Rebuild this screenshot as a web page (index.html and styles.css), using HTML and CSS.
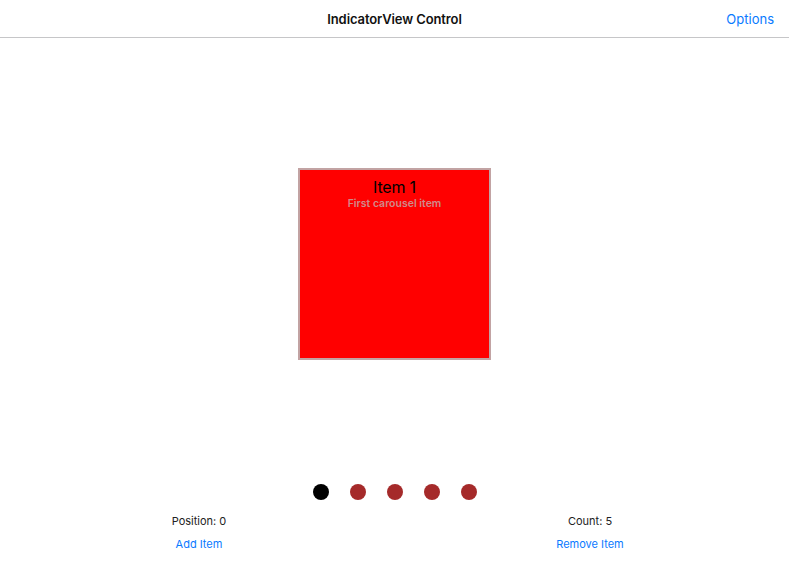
FILE: index.html
```html
<!DOCTYPE html>
<html>
<head>
<meta charset="utf-8">
<link rel="stylesheet" href="styles.css">
</head>
<body>
<div class="window">
  <header class="navbar">
    <div class="title">IndicatorView Control</div>
    <a class="options">Options</a>
  </header>
  <main class="stage">
    <div class="card">
      <div class="card-title">Item 1</div>
      <div class="card-sub">First carousel item</div>
    </div>
  </main>
  <div class="indicators">
    <span class="dot active"></span>
    <span class="dot"></span>
    <span class="dot"></span>
    <span class="dot"></span>
    <span class="dot"></span>
  </div>
  <div class="controls">
    <div class="col">
      <div class="label">Position: 0</div>
      <a class="btn">Add Item</a>
    </div>
    <div class="col">
      <div class="label">Count: 5</div>
      <a class="btn">Remove Item</a>
    </div>
  </div>
</div>
</body>
</html>
```
FILE: styles.css
```css
html, body {
  margin: 0;
  padding: 0;
  background: #ffffff;
}
body {
  font-family: "Inter", "Roboto", "Liberation Sans", sans-serif;
  color: #000;
}
.window {
  width: 789px;
  height: 563px;
  display: flex;
  flex-direction: column;
  border-radius: 0 0 12px 12px;
  overflow: hidden;
  background: #fff;
}
.navbar {
  height: 37px;
  border-bottom: 1px solid #c6c6c8;
  display: flex;
  align-items: center;
  justify-content: center;
  position: relative;
  flex: none;
}
.title {
  font-size: 13px;
  font-weight: 600;
  letter-spacing: -0.1px;
  color: #111;
}
.options {
  position: absolute;
  right: 15px;
  top: 11px;
  font-size: 13px;
  color: #0a7aff;
}
.stage {
  height: 436px;
  flex: none;
  display: flex;
  justify-content: center;
  align-items: flex-start;
}
.card {
  margin-top: 130px;
  width: 189px;
  height: 188px;
  background: #ff0000;
  border: 2px solid #c2a3a3;
  display: flex;
  flex-direction: column;
  align-items: center;
}
.card-title {
  margin-top: 7px;
  font-size: 16px;
  line-height: 20px;
  color: #000;
  letter-spacing: -0.2px;
}
.card-sub {
  font-size: 10.5px;
  font-weight: 600;
  line-height: 13px;
  color: #cf8a8a;
}
.indicators {
  height: 36px;
  flex: none;
  display: flex;
  justify-content: center;
  align-items: center;
  gap: 21px;
  padding-left: 1px;
}
.dot {
  width: 16px;
  height: 16px;
  border-radius: 50%;
  background: #a52a2a;
  filter: blur(0.4px);
}
.dot.active {
  background: #000;
}
.controls {
  display: flex;
  padding: 4px 0 0 0;
}
.col {
  display: flex;
  flex-direction: column;
  align-items: center;
}
.col:first-child {
  width: 398px;
}
.col:last-child {
  width: 384px;
}
.label {
  font-size: 11px;
  line-height: 14px;
  color: #222;
}
.btn {
  margin-top: 9px;
  font-size: 11px;
  line-height: 14px;
  color: #0a7aff;
}
```
